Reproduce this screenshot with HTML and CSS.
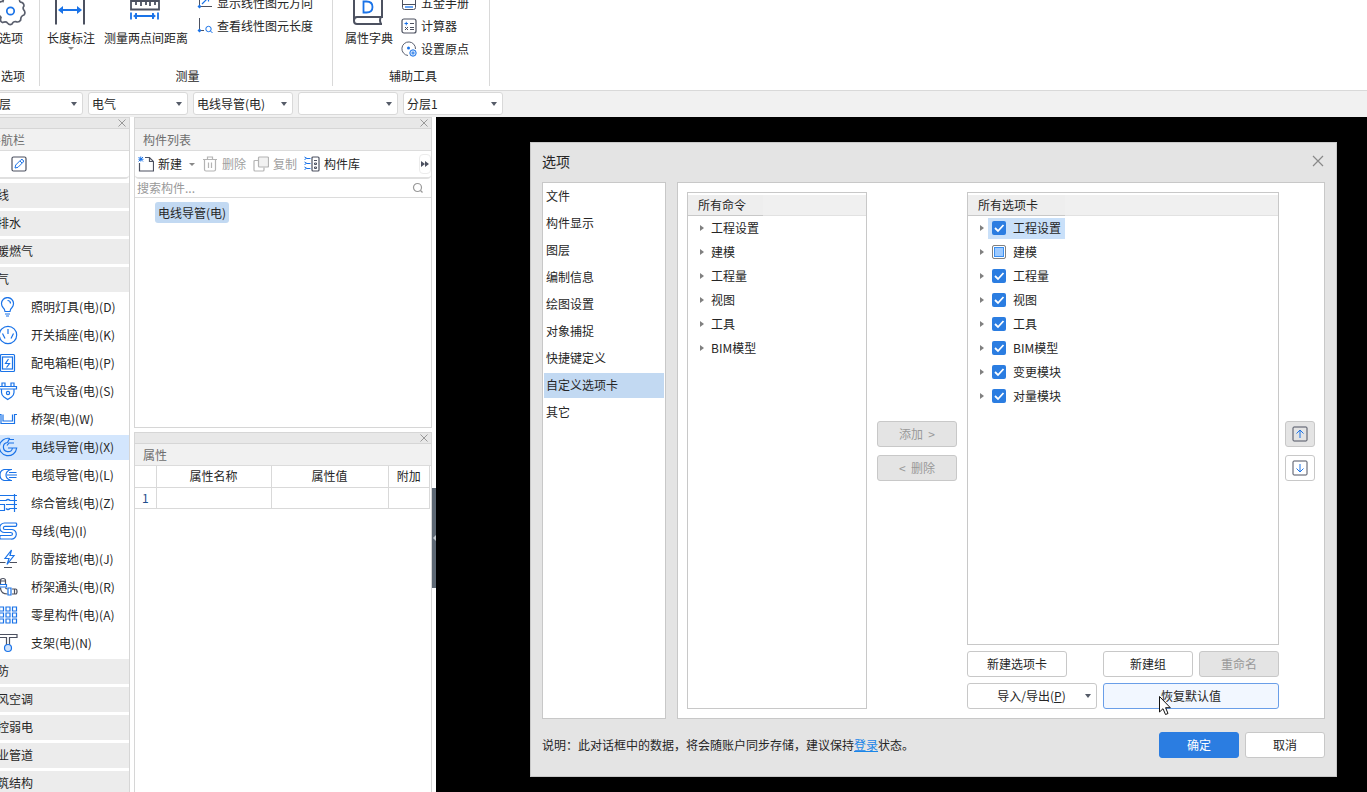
FILE: index.html
```html
<!DOCTYPE html>
<html lang="zh-CN">
<head>
<meta charset="utf-8">
<title>选项</title>
<link rel="stylesheet" href="styles.css">
</head>
<body>
<div class="shell">
  <header class="ribbon">
    <section class="group group-options">
      <div class="group-body">
        <button class="big-tool"><svg class="icon" width="32" height="32" viewBox="0 0 32 32"><path d="M13.500 3.500 Q16 0.500 18.500 3.500 L18.500 4.500 Q22 2 24.500 4.500 Q24.300 8 25.500 8.200 Q29 8.800 29 12 Q27 14 29.500 17 Q30.500 19.500 29 21 Q25.500 22 25.700 26 Q24 29 20.500 27.500 Q18 27.500 17 30 Q14.500 31.500 12.500 29 Q11 27 7.500 28.500 Q4.500 27.500 6 23.500 Q5 21.500 2.500 21 Q0.500 17.500 4 15.500 Q3 11 2.500 10.500 Q4.500 7 8 7.500 Q8.500 3 13.500 3.500Z" fill="none" stroke="#5a5f6d" stroke-width="1.700"/><circle cx="15.500" cy="17" r="3.700" fill="none" stroke="#1a73e8" stroke-width="1.700"/></svg><span>选项</span></button>
      </div>
      <h2 class="group-name">选项</h2>
    </section>
    <section class="group group-measure">
      <div class="group-body">
        <button class="big-tool"><svg class="icon" width="32" height="32" viewBox="0 0 32 32"><path d="M1 0V30.500M29 0V30.500" stroke="#4c5160" stroke-width="2"/><path d="M5 16H25" stroke="#1a73e8" stroke-width="2"/><path d="M3 16l5-4v8zM27 16l-5-4v8z" fill="#1a73e8"/></svg><span>长度标注</span><i class="caret small"></i></button>
        <button class="big-tool"><svg class="icon" width="32" height="32" viewBox="0 0 32 32"><path d="M0 7H28V15.500H0z M5 8v3M10 8v4M15 8v3M19 8v4M24 8v3" transform="translate(1)" fill="none" stroke="#4c5160" stroke-width="1.800"/><path d="M1 18.500v7M28 18.500v7M5 22H24M6 19v6M23 19v6" stroke="#1a73e8" stroke-width="1.800" fill="none"/><path d="M3 22l4-3v6zM26 22l-4-3v6z" fill="#1a73e8"/></svg><span>测量两点间距离</span></button>
        <div class="tool-stack">
          <button class="tool"><svg class="icon" width="16" height="16" viewBox="0 0 16 16"><path d="M2.500 0v11.500H15" fill="none" stroke="#4c5160"/><path d="M5 9l6-6M7.500 2.500H11.500V6.500" fill="none" stroke="#1a73e8" stroke-width="1.200"/><path d="M2.500 9.500l2 2-2 2-2-2z" fill="#1a73e8"/></svg>显示线性图元方向</button>
          <button class="tool"><svg class="icon" width="16" height="16" viewBox="0 0 16 16"><path d="M2.500 0v12.500H7" fill="none" stroke="#4c5160"/><path d="M2.500 10.500l2 2-2 2-2-2z" fill="#1a73e8"/><circle cx="11.500" cy="11" r="2.700" fill="none" stroke="#1a73e8"/><path d="M13.500 13l2 2" stroke="#1a73e8"/></svg>查看线性图元长度</button>
        </div>
      </div>
      <h2 class="group-name">测量</h2>
    </section>
    <section class="group group-aux">
      <div class="group-body">
        <button class="big-tool"><svg class="icon" width="32" height="32" viewBox="0 0 32 32"><path d="M1 0V27Q1 30 4 30H29M29 0V23H4Q1 23 1 26.500M28 23Q26 26 28 30" fill="none" stroke="#4c5160" stroke-width="2"/><path d="M10.500 7.500H13.500Q19.500 7.500 19.500 13T13.500 18.500H10.500z" fill="none" stroke="#1a73e8" stroke-width="1.800"/></svg><span>属性字典</span></button>
        <div class="tool-stack">
          <button class="tool"><svg class="icon" width="16" height="16" viewBox="0 0 16 16"><path d="M1.500 0V12.500Q1.500 14.500 3.500 14.500H12.500Q14.500 14.500 14.500 12.500V0M1.500 9.500H14.500" fill="none" stroke="#4c5160"/><path d="M4 12h8" stroke="#6aa6f5" stroke-width="2"/></svg>五金手册</button>
          <button class="tool"><svg class="icon" width="16" height="16" viewBox="0 0 16 16"><rect x="1" y="1" width="14" height="14" rx="2" fill="none" stroke="#4c5160" stroke-width="1.200"/><path d="M3.500 5.500h3.500M5.250 3.800v3.500" stroke="#1a73e8"/><path d="M9 5.500h4M9 9.500h4M9 11.500h4M4 9l3 3M7 9L4 12" stroke="#4c5160"/></svg>计算器</button>
          <button class="tool"><svg class="icon" width="16" height="16" viewBox="0 0 16 16"><path d="M7 14.500A6.800 6.800 0 1 1 14.500 8" fill="none" stroke="#5a6070"/><circle cx="7.500" cy="7" r="1.500" fill="#1a73e8"/><circle cx="12" cy="12" r="3.200" fill="#cfe2fb" stroke="#1a73e8"/><circle cx="12" cy="12" r="1" fill="#fff" stroke="#1a73e8"/></svg>设置原点</button>
        </div>
      </div>
      <h2 class="group-name">辅助工具</h2>
    </section>
  </header>

  <div class="context-bar">
    <select class="picker" aria-label="楼层"><option>楼层</option></select>
    <select class="picker" aria-label="专业"><option>电气</option></select>
    <select class="picker" aria-label="构件类型"><option>电线导管(电)</option></select>
    <select class="picker" aria-label="构件"><option></option></select>
    <select class="picker" aria-label="分层"><option>分层1</option></select>
  </div>

  <main class="workspace">
    <aside class="panel nav">
      <div class="grip"><button class="close" aria-label="关闭"><svg width="8" height="8" viewBox="0 0 8 8"><path d="M.5.500l7 7M7.500.500l-7 7" stroke="#999"/></svg></button></div>
      <h2 class="panel-title">导航栏</h2>
      <div class="toolbar nav-toolbar"><button class="tool" aria-label="编辑"><svg class="icon" width="16" height="16" viewBox="0 0 16 16"><rect x="1" y="1" width="14" height="14" rx="1.500" fill="none" stroke="#4c5160" stroke-width="1.200"/><path d="M4 12l.700-3L10 3.700q1-.700 2 .300t.300 2L7 11.300zM9 5l2 2" fill="none" stroke="#1a73e8"/></svg></button></div>
      <ul class="nav-list">
        <li><button class="nav-head">轴线</button></li>
        <li><button class="nav-head">给排水</button></li>
        <li><button class="nav-head">采暖燃气</button></li>
        <li><button class="nav-head">电气</button></li>
        <li><button class="nav-item"><svg class="icon blue" width="20" height="20" viewBox="0 0 20 20"><path d="M7 14.500Q7 12.500 5 10.500A6 6 0 1 1 14 10.500Q12 12.500 12 14.500zM7 17h5M8 19h3M9.500 3.500Q12.500 3.500 12.500 6.500"/></svg>照明灯具(电)(D)</button></li>
        <li><button class="nav-item"><svg class="icon blue" width="20" height="20" viewBox="0 0 20 20"><circle cx="10" cy="10" r="8.700"/><path d="M10 4v5M4.500 8.500l2.500 5M15.500 8.500l-2.500 5"/></svg>开关插座(电)(K)</button></li>
        <li><button class="nav-item"><svg class="icon blue" width="20" height="20" viewBox="0 0 20 20"><rect x="2.500" y="1.500" width="14" height="17" rx="1"/><rect x="4.500" y="4" width="10" height="12"/><path d="M10.500 6L7.500 10.500H11.500L8.500 14.500"/></svg>配电箱柜(电)(P)</button></li>
        <li><button class="nav-item"><svg class="icon blue" width="20" height="20" viewBox="0 0 20 20"><path d="M1 5.500H18.500V8H1zM4 5V2h3v3M13 5V2h3v3M3.500 8V11.500Q3.500 14 6 16L9.700 18.500L13.500 16Q16 14 16 11.500V8"/><circle cx="10" cy="12" r="1.600"/></svg>电气设备(电)(S)</button></li>
        <li><button class="nav-item"><svg class="icon blue" width="20" height="20" viewBox="0 0 20 20"><path d="M.5 5.500H3V14.500H16.500V5.500H19M5 5.500V12H14.500V5.500"/></svg>桥架(电)(W)</button></li>
        <li><button class="nav-item selected"><svg class="icon blue" width="20" height="20" viewBox="0 0 20 20"><path d="M12 1.500A8.700 8.700 0 1 0 18.700 11H14.500A4.600 4.600 0 1 1 9.500 5.500M9.500 5.500L11 2.500H16M9 8.500L11 6H16M10 11H18.500"/></svg>电线导管(电)(X)</button></li>
        <li><button class="nav-item"><svg class="icon blue" width="20" height="20" viewBox="0 0 20 20"><path d="M14 4.500H6Q2 5.500 2 10T6 15.500H14M13 4.500Q8 6 8 10T13 15.500M11 7.500h7.500M9 10H19M11 12.500h7.500"/></svg>电缆导管(电)(L)</button></li>
        <li><button class="nav-item"><svg class="icon blue" width="20" height="20" viewBox="0 0 20 20"><path d="M1 2.500H19M1 7.500H8Q10 5.500 12 7.500H19M16.500 1V19M19 11.500H8M1 11.500H6.500V17.500H1M19 15.500H12Q10 17.500 8 15.500"/></svg>综合管线(电)(Z)</button></li>
        <li><button class="nav-item"><svg class="icon blue" width="20" height="20" viewBox="0 0 20 20"><path d="M18 2H6.500A4.700 4.700 0 0 0 6.500 11.500H12.500Q14.500 11.500 14.500 13T12.500 14.500H2.500Q1 16.500 2.500 18H13A4.700 4.700 0 0 0 14 8.500H7Q5.300 8.500 5.300 7T7 5.300H18Q19.500 3.500 18 2z"/></svg>母线(电)(I)</button></li>
        <li><button class="nav-item"><svg class="icon blue" width="20" height="20" viewBox="0 0 20 20"><path d="M13.500 1L7 9.500H11L9 15.500L16 6.500H12z"/><path class="dark" d="M1 13.500H7.500M11.500 13.500H19M6 18.500h8"/></svg>防雷接地(电)(J)</button></li>
        <li><button class="nav-item"><svg class="icon blue" width="20" height="20" viewBox="0 0 20 20"><path class="dark" d="M2.500 7V3.500Q2.500 1.500 5 1.500T7.500 3.500V7M2.500 10.500Q2.500 17 9.500 17M7.500 10.500Q7.500 12 9.500 12M14 12H17.500Q19 12 19 14.500T17.500 17H14M16.500 12v5M2.500 4h5"/><path d="M1.500 7.500h7v2.500h-7zM10 11h3v7h-3z"/></svg>桥架通头(电)(R)</button></li>
        <li><button class="nav-item"><svg class="icon blue" width="20" height="20" viewBox="0 0 20 20"><path d="M1.500 2h4v4h-4zM8 2h4v4H8zM14.500 2h4v4h-4zM1.500 8h4v4h-4zM8 8h4v4H8zM14.500 8h4v4h-4zM1.500 14h4v4h-4zM8 14h4v4H8zM14.500 14h4v4h-4z"/></svg>零星构件(电)(A)</button></li>
        <li><button class="nav-item"><svg class="icon blue" width="20" height="20" viewBox="0 0 20 20"><path class="dark" d="M8.500 12V4.500H1V1.500H19V4.500H11.500V12"/><circle cx="10" cy="15" r="3.500" class="fill"/></svg>支架(电)(N)</button></li>
        <li><button class="nav-head">消防</button></li>
        <li><button class="nav-head">通风空调</button></li>
        <li><button class="nav-head">智控弱电</button></li>
        <li><button class="nav-head">工业管道</button></li>
        <li><button class="nav-head">建筑结构</button></li>
      </ul>
    </aside>

    <div class="panel-column">
      <section class="panel components">
        <div class="grip"><button class="close" aria-label="关闭"><svg width="8" height="8" viewBox="0 0 8 8"><path d="M.5.500l7 7M7.500.500l-7 7" stroke="#999"/></svg></button></div>
        <h2 class="panel-title">构件列表</h2>
        <div class="toolbar">
          <button class="tool"><svg class="icon" width="16" height="16" viewBox="0 0 16 16"><path d="M7 1.500H11.500L15.500 5.500V15H1.500V7M11.500 1.500V5.500H15.500" fill="none" stroke="#4c5160" stroke-width="1.200"/><path d="M.5 1l4.500 4.500M5 1L.5 5.500M2.750 .500v5M.500 3.250h5" stroke="#1a73e8"/></svg>新建<i class="caret small"></i></button>
          <button class="tool" disabled><svg class="icon" width="16" height="16" viewBox="0 0 16 16"><path d="M1 3.500H15M5.500 3V1H10.500V3M2.500 4V13.500Q2.500 15 4 15H12Q13.500 15 13.500 13.500V4M6.500 6.500V12M9.500 6.500V12" fill="none" stroke="#b4b4b4" stroke-width="1.200"/></svg>删除</button>
          <button class="tool" disabled><svg class="icon" width="16" height="16" viewBox="0 0 16 16"><path d="M5 4.500H2Q1 4.500 1 5.500V14Q1 15 2 15H10Q11 15 11 14V11.500" fill="none" stroke="#b4b4b4" stroke-width="1.200"/><rect x="5.500" y="1" width="10" height="10" rx="1" fill="#f2f2f2" stroke="#b4b4b4" stroke-width="1.200"/></svg>复制</button>
          <button class="tool"><svg class="icon" width="16" height="16" viewBox="0 0 16 16"><rect x="8" y="1" width="7" height="14" rx="1" fill="none" stroke="#4c5160" stroke-width="1.200"/><path d="M10 4.500h3M10.500 7h2v1.500h-2zM10.500 11h2v1.500h-2z" fill="none" stroke="#4c5160"/><path d="M3 2.500h3.500M3 7.500h3.500M3 12.500h3.500" stroke="#1a73e8"/><path d="M.5 1l2.500 1.500M.5 6l2.500 1.500M.5 11l2.500 1.500M.5 3.500l2-1M.5 8.500l2-1M.5 13.500l2-1" stroke="#1a73e8"/></svg>构件库</button>
          <button class="more" aria-label="更多"><svg width="8" height="6" viewBox="0 0 8 6"><path d="M0 0l4 3-4 3zM4 0l4 3-4 3z" fill="#4c5160"/></svg></button>
        </div>
        <div class="search"><input type="text" placeholder="搜索构件..." aria-label="搜索构件"><svg width="12" height="12" viewBox="0 0 12 12"><circle cx="5.500" cy="5.500" r="4" fill="none" stroke="#999" stroke-width="1.200"/><path d="M8.500 8.500l2 2" stroke="#999" stroke-width="1.200"/></svg></div>
        <div class="component-tree"><button class="component">电线导管(电)</button></div>
      </section>

      <section class="panel properties">
        <div class="grip"><button class="close" aria-label="关闭"><svg width="8" height="8" viewBox="0 0 8 8"><path d="M.5.500l7 7M7.500.500l-7 7" stroke="#999"/></svg></button></div>
        <h2 class="panel-title">属性</h2>
        <table class="property-table">
          <colgroup><col class="col-index"><col class="col-name"><col class="col-value"><col class="col-extra"></colgroup>
          <thead><tr><th></th><th>属性名称</th><th>属性值</th><th>附加</th></tr></thead>
          <tbody><tr><td class="index">1</td><td></td><td></td><td></td></tr></tbody>
        </table>
      </section>
    </div>

    <div class="splitter"><button class="handle" aria-label="折叠"><svg width="3" height="6" viewBox="0 0 3 6"><path d="M3 0L0 3l3 3z" fill="#c5cbd1"/></svg></button></div>

    <div class="canvas">
      <div class="dialog" role="dialog" aria-labelledby="dialog-title">
        <div class="dialog-head">
          <h1 class="dialog-title" id="dialog-title">选项</h1>
          <button class="close" aria-label="关闭"><svg width="12" height="12" viewBox="0 0 12 12"><path d="M1 1l10 10M11 1L1 11" stroke="#888" stroke-width="1.200"/></svg></button>
        </div>
        <div class="dialog-body">
          <nav class="pages">
            <button class="page">文件</button>
            <button class="page">构件显示</button>
            <button class="page">图层</button>
            <button class="page">编制信息</button>
            <button class="page">绘图设置</button>
            <button class="page">对象捕捉</button>
            <button class="page">快捷键定义</button>
            <button class="page current">自定义选项卡</button>
            <button class="page">其它</button>
          </nav>
          <div class="customize">
            <section class="tree commands">
              <header class="tree-head"><h2 class="tree-title">所有命令</h2></header>
              <ul class="tree-rows">
                <li class="row"><i class="twisty"></i><span>工程设置</span></li>
                <li class="row"><i class="twisty"></i><span>建模</span></li>
                <li class="row"><i class="twisty"></i><span>工程量</span></li>
                <li class="row"><i class="twisty"></i><span>视图</span></li>
                <li class="row"><i class="twisty"></i><span>工具</span></li>
                <li class="row"><i class="twisty"></i><span>BIM模型</span></li>
              </ul>
            </section>
            <div class="transfer">
              <button class="btn" disabled>添加&nbsp; &gt;</button>
              <button class="btn" disabled>&lt;&nbsp; 删除</button>
            </div>
            <div class="tabs-column">
              <section class="tree tabs">
                <header class="tree-head"><h2 class="tree-title wide">所有选项卡</h2></header>
                <ul class="tree-rows">
                  <li class="row"><i class="twisty"></i><label class="check active"><input type="checkbox" checked>工程设置</label></li>
                  <li class="row"><i class="twisty"></i><label class="check"><input type="checkbox" class="partial">建模</label></li>
                  <li class="row"><i class="twisty"></i><label class="check"><input type="checkbox" checked>工程量</label></li>
                  <li class="row"><i class="twisty"></i><label class="check"><input type="checkbox" checked>视图</label></li>
                  <li class="row"><i class="twisty"></i><label class="check"><input type="checkbox" checked>工具</label></li>
                  <li class="row"><i class="twisty"></i><label class="check"><input type="checkbox" checked>BIM模型</label></li>
                  <li class="row"><i class="twisty"></i><label class="check"><input type="checkbox" checked>变更模块</label></li>
                  <li class="row"><i class="twisty"></i><label class="check"><input type="checkbox" checked>对量模块</label></li>
                </ul>
              </section>
              <div class="actions">
                <button class="btn new-tab">新建选项卡</button>
                <button class="btn new-group">新建组</button>
                <button class="btn" disabled>重命名</button>
              </div>
              <div class="actions">
                <button class="btn transfer-menu"><span>导入/导出(<u>P</u>)</span><i class="caret"></i></button>
                <button class="btn restore">恢复默认值<svg class="pointer" width="12" height="20" viewBox="0 0 12 20"><path d="M.5.500V16L4 12.700L6.500 18.500L9 17.500L6.600 11.700H11.300z" fill="#fff" stroke="#111"/></svg></button>
              </div>
            </div>
            <div class="order">
              <button class="btn icon-btn" aria-label="上移" disabled><svg width="16" height="16" viewBox="0 0 16 16"><rect x="1" y="1" width="14" height="14" rx="1" fill="none" stroke="#4c5160"/><path d="M8 12V4M4.500 7.500L8 4l3.500 3.500" fill="none" stroke="#1a73e8"/></svg></button>
              <button class="btn icon-btn" aria-label="下移"><svg width="16" height="16" viewBox="0 0 16 16"><rect x="1" y="1" width="14" height="14" rx="1" fill="none" stroke="#4c5160"/><path d="M8 4v8M4.500 8.500L8 12l3.500-3.500" fill="none" stroke="#1a73e8"/></svg></button>
            </div>
          </div>
        </div>
        <footer class="dialog-foot">
          <p class="note">说明：此对话框中的数据，将会随账户同步存储，建议保持<a href="#">登录</a>状态。</p>
          <button class="btn primary">确定</button>
          <button class="btn">取消</button>
        </footer>
      </div>
    </div>
  </main>
</div>
</body>
</html>
```

FILE: styles.css
```css
* { box-sizing: border-box; }
html, body { margin: 0; height: 100%; overflow: hidden; }
body { background: #fff; color: #262626; font: 12px/18px "Noto Sans CJK SC", "Noto Sans", sans-serif; }
h1, h2, p, ul { margin: 0; padding: 0; font-size: 12px; font-weight: 400; }
ul { list-style: none; }
button, input, select { font: inherit; color: inherit; margin: 0; padding: 0; border: 0; background: none; border-radius: 0; }
svg { display: block; flex: none; }

.shell { display: flex; flex-direction: column; height: calc(100vh + 8px); margin: -8px 0 0 -20px; }

/* Ribbon */
.ribbon { display: flex; flex: none; height: 99px; padding-bottom: 4px; border-bottom: 1px solid #d9d9d9; }
.group { display: flex; flex-direction: column; border-right: 1px solid #d9d9d9; }
.group-body { display: flex; height: 74px; }
.group-name { text-align: center; line-height: 20px; }
.group-options { width: 60px; padding-left: 3px; }
.group-options .group-body { justify-content: center; }
.group-options .group-name { padding-left: 4px; }
.group-measure { width: 293px; padding: 0 4px 0 7px; }
.group-measure .group-body { gap: 9px; }
.group-aux { width: 157px; padding: 0 8px 0 12px; }
.group-aux .group-body { gap: 8px; }
.big-tool { display: flex; flex-direction: column; align-items: center; padding-top: 2px; }
.big-tool span { margin-top: 3px; }
.tool { display: flex; align-items: center; gap: 4px; white-space: nowrap; }
.tool:disabled { color: #a0a0a0; }
.tool-stack { display: flex; flex-direction: column; }
.tool-stack .tool { height: 23px; padding-bottom: 1px; }
.caret { width: 0; height: 0; border: 3px solid transparent; border-top: 4px solid #555b68; border-bottom: 0; }
.caret.small { border-top: 3px solid #888; }

/* Context pickers */
.context-bar { display: flex; flex: none; gap: 5px; height: 26px; padding: 1px 3px; background: #f1f1f1; }
.picker { appearance: none; width: 100px; height: 23px; padding: 0 3px; border: 1px solid #d9d9d9; border-radius: 3px; background: #fff url("data:image/svg+xml,%3Csvg xmlns='http://www.w3.org/2000/svg' width='6' height='4'%3E%3Cpath d='M0 0h6L3 4z' fill='%23555b68'/%3E%3C/svg%3E") no-repeat right 5px center; }

/* Docked panels */
.workspace { display: flex; flex: 1; min-height: 0; }
.panel { display: flex; flex-direction: column; background: #fff; border: 1px solid #d6d6d6; overflow: hidden; }
.nav { width: 150px; margin-right: 4px; border-bottom: 0; }
.grip { display: flex; flex: none; justify-content: flex-end; align-items: center; height: 11px; padding-right: 3px; background: #e8e8e8; border-bottom: 1px solid #d6d6d6; }
.panel-title { flex: none; height: 22px; padding-left: 8px; line-height: 21px; color: #6e6e6e; background: #f1f1f1; border-bottom: 1px solid #dcdcdc; }
.toolbar { display: flex; flex: none; align-items: center; gap: 7px; height: 28px; padding-left: 3px; border-bottom: 2px solid #e0e0e0; border-radius: 0 0 4px 4px; }
.toolbar .caret { margin-left: 3px; }
.nav-toolbar { padding-left: 30px; }
.more { display: grid; place-items: center; width: 12px; height: 20px; margin-left: auto; border: 1px solid #ececec; border-radius: 4px; }
.nav-list { display: grid; gap: 3px; padding-top: 4px; }
.nav-head, .nav-item { display: flex; align-items: center; width: 100%; height: 25px; padding-bottom: 1px; white-space: nowrap; }
.nav-head { padding-left: 4px; background: #ececec; }
.nav-item { gap: 13px; padding-left: 17px; }
.nav-item.selected { background: #d3e6fd; }
.blue { fill: none; stroke: #1a73e8; stroke-width: 1.2; }
.blue .dark { stroke: #4c5160; }
.blue .fill { fill: #cfe2fb; }

.panel-column { display: flex; flex-direction: column; gap: 4px; width: 298px; }
.components { flex: 311 1 0; }
.properties { flex: 361 1 0; border-bottom: 0; }
.search { display: flex; flex: none; align-items: center; height: 19px; padding: 0 7px 0 2px; border-bottom: 1px solid #dcdcdc; }
.search input { flex: 1; min-width: 0; outline: 0; }
.search input::placeholder { color: #999; }
.component-tree { padding: 4px 20px; }
.component { height: 21px; padding: 0 3px; background: #c2d9f2; border-radius: 3px; }
.property-table { width: calc(100% - 1px); border-collapse: collapse; table-layout: fixed; }
.property-table th, .property-table td { height: 21px; padding: 0; font-weight: 400; text-align: center; line-height: 20px; border: 1px solid #d9d9d9; border-width: 0 1px 1px 0; }
.property-table .index { color: #1f4e8c; }
.col-index { width: 21px; }
.col-name { width: 115px; }
.col-value { width: 117px; }

.splitter { display: flex; flex-direction: column; width: 4px; padding-top: 371px; }
.handle { display: grid; place-items: center end; width: 4px; height: 100px; background: #5d6874; }

/* Drawing area and dialog */
.canvas { display: flex; flex: 1; min-width: 0; padding: 25px 30px 15px 94px; background: #000; }
.dialog { display: flex; flex: 1; flex-direction: column; min-width: 0; padding: 0 11px; background: #e4e4e4; border: 1px solid #c8c8c8; }
.dialog-head { display: flex; flex: none; align-items: center; justify-content: space-between; height: 39px; padding: 0 1px 3px 0; }
.dialog-title { font-size: 14px; }
.dialog-body { display: flex; flex: 1; gap: 11px; min-height: 0; }
.pages { display: flex; flex-direction: column; gap: 2px; width: 124px; padding: 1px; background: #fff; border: 1px solid #c8c8c8; }
.page { height: 25px; padding: 0 0 1px 2px; text-align: left; }
.page.current { background: #c2d9f2; }
.customize { display: flex; flex: 1; gap: 10px; min-width: 0; padding: 9px; background: #fff; border: 1px solid #c8c8c8; }
.tree { background: #fff; border: 1px solid #c8c8c8; }
.commands { width: 180px; }
.tree-head { display: flex; height: 23px; padding-top: 2px; }
.tree-head::after { content: ""; flex: 1; background: #f0f0f0; border-bottom: 1px solid #e2e2e2; }
.tree-title { width: 75px; padding-left: 10px; line-height: 20px; background: #eee; border-bottom: 1px solid #c8c8c8; }
.tree-title.wide { width: 97px; }
.row { display: flex; align-items: center; height: 24px; padding-left: 12px; }
.row span { margin-left: 7px; }
.twisty { width: 0; height: 0; border: 3px solid transparent; border-left: 4px solid #808080; border-right: 0; }
.check { display: flex; align-items: center; gap: 7px; height: 21px; margin-left: 4px; padding: 0 4px; }
.check.active { background: #c9e0f9; }
.check input { appearance: none; width: 14px; height: 14px; border-radius: 2px; }
.check input:checked { background: #2b7de1 url("data:image/svg+xml,%3Csvg xmlns='http://www.w3.org/2000/svg' width='14' height='14'%3E%3Cpath d='M3 7l3 3 5.500-6' fill='none' stroke='white' stroke-width='1.800'/%3E%3C/svg%3E"); }
.check .partial { border: 1px solid #808080; background: linear-gradient(#9dcaff, #9dcaff) content-box; padding: 1px; box-shadow: inset 0 0 0 1px #fff, inset 0 0 0 2px #3b8ff0; }
.transfer, .order { display: flex; flex-direction: column; gap: 8px; padding-top: 229px; }
.transfer { width: 80px; }
.order { width: 30px; margin-left: -4px; }
.btn { min-width: 80px; height: 26px; padding: 0 4px; background: #fff; border: 1px solid #c8c8c8; border-radius: 3px; }
.btn:disabled { color: #999; background: #e4e4e4; }
.tabs-column { display: flex; flex: 1; flex-direction: column; gap: 6px; min-width: 0; }
.tabs { flex: 1; }
.actions { display: flex; gap: 6px; }
.new-tab { width: 100px; margin-right: auto; }
.new-group { width: 90px; }
.transfer-menu { display: flex; align-items: center; width: 130px; padding: 0 5px 0 10px; }
.transfer-menu span { flex: 1; }
.restore { position: relative; flex: 1; background: #f2f7ff; border-color: #6a9ee8; }
.pointer { position: absolute; left: 55px; top: 12px; }
.icon-btn { display: grid; place-items: center; min-width: 30px; }
.dialog-foot { display: flex; flex: none; gap: 6px; height: 57px; padding-top: 13px; }
.note { flex: 1; line-height: 26px; }
.note a { color: #1a86e8; }
.primary { color: #fff; background: #2b7de1; border-color: #2b7de1; }
```
